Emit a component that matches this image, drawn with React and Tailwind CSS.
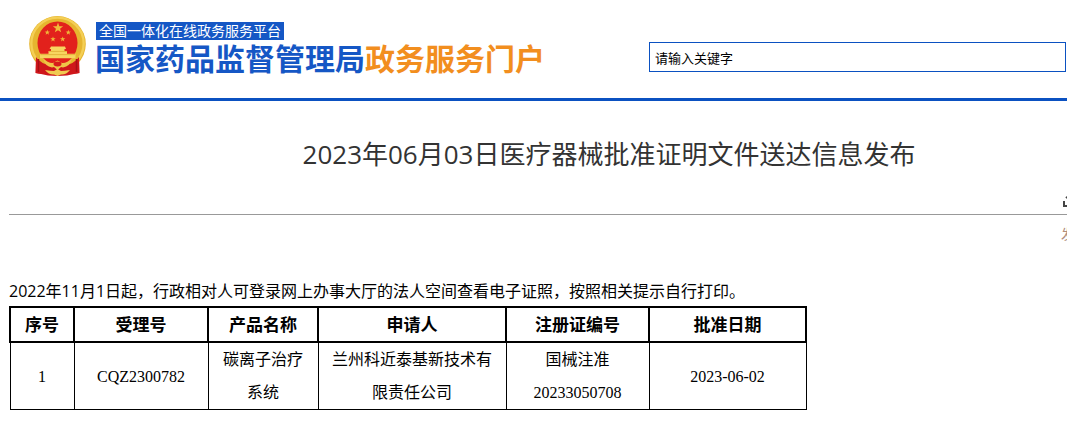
import React from 'react';

const columns = [
  { label: '序号', width: 'w-[64px]' },
  { label: '受理号', width: 'w-[134px]' },
  { label: '产品名称', width: 'w-[110px]' },
  { label: '申请人', width: 'w-[188px]' },
  { label: '注册证编号', width: 'w-[143px]' },
  { label: '批准日期', width: 'w-[157px]' },
];

const rows = [
  ['1', 'CQZ2300782', '碳离子治疗系统', '兰州科近泰基新技术有限责任公司', '国械注准20233050708', '2023-06-02'],
];

const Star = ({ x, y, r }) => {
  const points = Array.from({ length: 10 }, (_, i) => {
    const radius = i % 2 ? r * 0.4 : r;
    const angle = (Math.PI / 5) * i - Math.PI / 2;
    return `${x + radius * Math.cos(angle)},${y + radius * Math.sin(angle)}`;
  }).join(' ');
  return <polygon points={points} fill="#f0b93a" />;
};

const Emblem = () => (
  <svg viewBox="0 0 58 62" className="h-[62px] w-[58px] shrink-0" aria-hidden="true">
    {/* Wheat ring */}
    <ellipse cx="28.5" cy="29" rx="28.3" ry="28" fill="#e6b52f" />
    <ellipse cx="28.5" cy="28.6" rx="26.2" ry="26" fill="none" stroke="#f4cf55" strokeWidth="2.4" />
    <ellipse cx="28.5" cy="28" rx="20" ry="21.6" fill="#e2211c" />
    <Star x={29} y={13} r={5.4} />
    <Star x={18.3} y={17.5} r={2.8} />
    <Star x={39.3} y={17.5} r={2.8} />
    <Star x={24} y={24.2} r={2.8} />
    <Star x={33.7} y={24.2} r={2.8} />
    {/* Gate */}
    <path d="M22 31.5h14l1 2.6h-1.5v2H38v2.6h8.5v4.5H11v-4.5h8.5v-2.6H22v-2h-1.5z" fill="#f7d560" />
    <path d="M11.5 39.6h34.5M20 36.4h18" stroke="#dca52d" strokeWidth="0.7" />
    {/* Drapery and cog */}
    <path d="M7 42q5 7 14 8h15q9-1 14-8l.6 16q-3 1-5.6 1l-7 1.500-9.500.500-9.500-.5-7-1.500q-2.600 0-5.600-1z" fill="#cf171b" />
    <path d="M9.500 44v13M47.500 44v13" stroke="#a80f16" strokeWidth="1.500" />
    <path d="M14 43.500q5 5 10 4.500l4.500-2.500 4.500 2.500q5 .5 10-4.500-2 8-9 9l-2-.5-3.500 3-3.500-3-2 .5q-7-1-9-9z" fill="#efc548" />
    <ellipse cx="28.5" cy="49" rx="4" ry="2.400" fill="#d71c1c" />
    <path d="M16 55q6 1 9 1l3.500-2 3.500 2q3 0 9-1-4 5-9 4.500l-3.500 1.500-3.500-1.500q-5 .5-9-4.500z" fill="#f0ca50" />
  </svg>
);

const ShareIcon = () => (
  <svg viewBox="0 0 18 18" className="h-[18px] w-[18px]" fill="none" stroke="#444444" strokeWidth="2" aria-hidden="true">
    <path d="M2 10v5h13v-4" />
    <path d="M4 7c2-2 5-3 8-3M9 1l4 3-4 4" />
  </svg>
);

const Header = () => (
  <header className="flex border-b-3 border-[#0b51c1] pt-[15px] pb-5 pl-[29px]">
    <div className="flex w-[620px] shrink-0">
      <Emblem />
      <div className="ml-2 pt-[7px]">
        <p className="ml-px w-[188px] bg-[#1557c5] text-center text-[14px] leading-[18px] whitespace-nowrap text-white">
          全国一体化在线政务服务平台
        </p>
        <p className="text-[30px] leading-[38px] font-bold whitespace-nowrap text-[#1557c5]">
          国家药品监督管理局<span className="text-[#f28e1e]">政务服务门户</span>
        </p>
      </div>
    </div>
    <input
      type="text"
      aria-label="关键字"
      defaultValue="请输入关键字"
      className="mt-[27px] mr-px h-[30px] min-w-0 flex-1 border border-[#0b51c1] px-[5px] text-[13px] text-black outline-none"
    />
  </header>
);

const App = () => (
  <div className="overflow-hidden bg-white pb-6 font-['Open_Sans','Noto_Sans_CJK_SC',sans-serif] text-black">
    <Header />

    <main className="ml-[9px] min-w-[1200px]">
      <h1 className="pt-[34px] text-center text-[26px] leading-[38px] text-[#333333]">
        2023年06月03日医疗器械批准证明文件送达信息发布
      </h1>

      {/* Page tools and publish date */}
      <div className="flex border-b border-[#999999] pt-[18px] pb-[5px] pl-[1053px]">
        <button type="button" aria-label="分享">
          <ShareIcon />
        </button>
      </div>
      <p className="pt-2 pl-[1052px] text-[14px] leading-[22px] text-[#b08e7c]">发布时间：2023-06-03</p>

      <p className="mt-[34px] text-[16px] leading-[24px]">
        2022年11月1日起，行政相对人可登录网上办事大厅的法人空间查看电子证照，按照相关提示自行打印。
      </p>
      <table className="mt-[3px] w-[796px] table-fixed border-collapse text-center">
        <thead>
          <tr>
            {columns.map((column) => (
              <th key={column.label} className={`${column.width} border-2 border-black text-[17px] leading-[33px] font-bold`}>
                {column.label}
              </th>
            ))}
          </tr>
        </thead>
        <tbody className="font-['Liberation_Serif','Noto_Sans_CJK_SC',serif]">
          {rows.map((row) => (
            <tr key={row[0]}>
              {row.map((cell) => (
                <td key={cell} className="border border-black px-3 text-[16px] leading-[33px]">
                  {cell}
                </td>
              ))}
            </tr>
          ))}
        </tbody>
      </table>
    </main>
  </div>
);

export default App;
